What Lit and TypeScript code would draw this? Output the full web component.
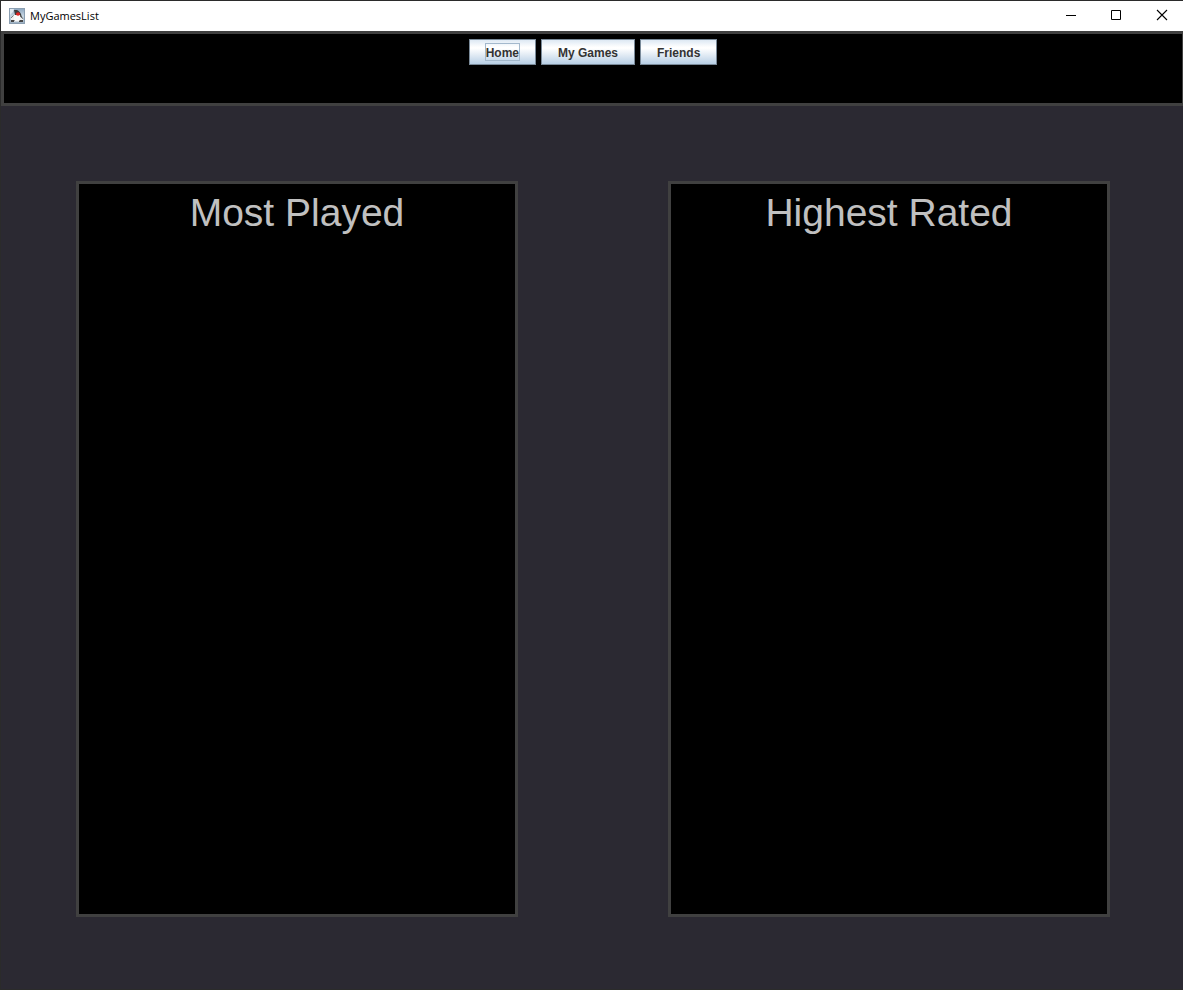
import { LitElement, html, css } from "lit";
import { customElement, property, state } from "lit/decorators.js";

@customElement("ranking-panel")
class RankingPanel extends LitElement {
  @property() heading = "";

  static styles = css`
    :host {
      display: block;
      box-sizing: border-box;
      border: 3px solid #404040;
      background: #000;
      padding-top: 5px;
    }
    .heading {
      margin: 0;
      font: 400 39px/48px "Liberation Sans", Arial, sans-serif;
      color: #c0c0c0;
      text-align: center;
    }
  `;

  render() {
    return html`<h2 class="heading">${this.heading}</h2>`;
  }
}

@customElement("app-root")
class AppRoot extends LitElement {
  @state() private current = "Home";

  static styles = css`
    :host {
      display: flex;
      flex-direction: column;
      box-sizing: border-box;
      min-height: 100vh;
      border: solid #2b2b2b;
      border-width: 1px 0 1px 1px;
      background: #2b2932;
    }
    .titlebar {
      display: flex;
      align-items: center;
      height: 30px;
      padding-left: 8px;
      background: #fff;
      color: #000;
    }
    .title {
      flex: 1;
      margin: 0 0 0 5px;
      font: 400 11px/16px "Open Sans", "Noto Sans", sans-serif;
    }
    .window-button {
      display: flex;
      align-items: center;
      justify-content: center;
      width: 46px;
      height: 30px;
      padding: 0;
      border: 0;
      background: none;
    }
    .window-button.close {
      width: 44px;
    }
    svg {
      display: block;
    }
    .nav {
      display: flex;
      justify-content: center;
      align-items: flex-start;
      gap: 5px;
      box-sizing: border-box;
      min-height: 75px;
      padding: 5px 0;
      border: 3px solid #404040;
      border-right-width: 1px;
      background: #000;
    }
    .tab {
      box-sizing: border-box;
      height: 26px;
      padding: 0 15px;
      border: 1px solid #7a8a99;
      background: linear-gradient(#dde8f3 0%, #fff 30%, #fff 35%, #b8cfe5 100%);
      color: #333;
      font: 700 12px/14px "Liberation Sans", Arial, sans-serif;
    }
    .label {
      display: block;
      padding-top: 2px;
      border: 1px solid transparent;
    }
    .tab.current .label {
      border-color: #a3b8cc;
    }
    .panels {
      flex: 1;
      display: grid;
      grid-template-columns: 1fr 1fr;
      gap: 150px;
      padding: 75px 73px 72px 75px;
    }
  `;

  render() {
    return html`
      <header class="titlebar">
        <svg width="16" height="16" viewBox="0 0 16 16" aria-hidden="true">
          <defs>
            <linearGradient id="sky" x1="0" y1="0" x2="0" y2="1">
              <stop offset="0" stop-color="#8fa9c2" />
              <stop offset=".5" stop-color="#c9d8e4" />
              <stop offset="1" stop-color="#9fb2c3" />
            </linearGradient>
          </defs>
          <rect width="16" height="16" fill="#8b9fb2" />
          <rect x="1" y="1" width="14" height="14" fill="url(#sky)" />
          <path d="M1 1h4L4 4 1 7z" fill="#e3ebf2" />
          <path d="M5 2h3c2 1 3 2 4 4l1 4-2-1-5-2z" fill="#3c3c3c" />
          <path d="M5 7l3 0 3 0 1 5-2 1.500H5l-1.500-2z" fill="#fafafa" />
          <path d="M2 10L5 8v4H2zM11 9l3 2v2h-3z" fill="#f0f0f0" />
          <path d="M4.500 7.500L2 10M12 8l2 3" fill="none" stroke="#555" stroke-width=".7" />
          <ellipse cx="9" cy="6" rx="2" ry="1.700" fill="#e32222" />
          <path d="M2 12h3l1 1h-1v1H2zM10 13l1-1h3v2h-4z" fill="#454545" />
        </svg>
        <h1 class="title">MyGamesList</h1>
        <button class="window-button" aria-label="Minimize">
          <svg width="16" height="16"><path d="M4 7h10v1H4z" /></svg>
        </button>
        <button class="window-button" aria-label="Maximize">
          <svg width="16" height="16">
            <path d="M3.500 2.500h9v9h-9z" fill="none" stroke="#000" />
          </svg>
        </button>
        <button class="window-button close" aria-label="Close">
          <svg width="16" height="16">
            <path d="M4 2L14 12M14 2L4 12" fill="none" stroke="#000" stroke-width="1.100" />
          </svg>
        </button>
      </header>
      <nav class="nav">
        ${["Home", "My Games", "Friends"].map(
          (name) => html`<button
            class="tab ${name === this.current ? "current" : ""}"
            @click=${() => (this.current = name)}
          ><span class="label">${name}</span></button>`
        )}
      </nav>
      <main class="panels">
        <ranking-panel heading="Most Played"></ranking-panel>
        <ranking-panel heading="Highest Rated"></ranking-panel>
      </main>
    `;
  }
}
